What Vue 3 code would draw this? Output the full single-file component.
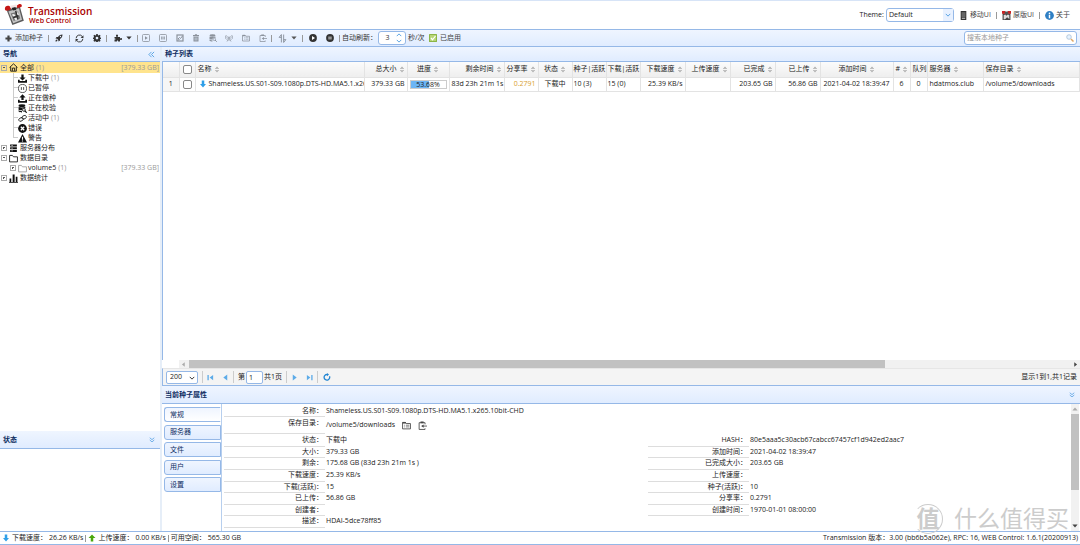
<script setup>
import { h, ref } from 'vue'

const shapes = {
  plus: '<path fill="currentColor" d="M5.500 1h5v4.500H15v5h-4.500V15h-5v-4.500H1v-5h4.500z"/>',
  rocket: '<path fill="currentColor" d="M15 1c-5 0-7 2-9 5H3L1 9l3 .5L6.500 12l.5 3 3-2v-3c3-2 5-4 5-9zM3 11c-1.500 0-2 2-2 4 2 0 4-.5 4-2z"/><circle cx="11" cy="5" r="1.300" fill="#e8f0ff"/>',
  refresh: '<path fill="none" stroke="currentColor" stroke-width="1.700" d="M2 7.500A6 6 0 0 1 13 4.500M14 8.500A6 6 0 0 1 3 11.500"/><path fill="currentColor" d="M15 2v5h-5zM1 14V9h5z"/>',
  gear: '<path fill="currentColor" fill-rule="evenodd" d="M6.500 0h3l.4 2.300 1.400.6L13.200 1.600l2 2-1.300 1.900.6 1.400 1.500.4v2.500l-1.500.4-.6 1.500 1.300 1.900-2 2-1.900-1.300-1.400.6-.4 1.600h-3l-.4-1.600-1.400-.6-1.900 1.300-2-2 1.300-1.900-.6-1.500L0 9.800V7.300l1.500-.4.6-1.400L.8 3.600l2-2 1.900 1.300 1.400-.6zM8 5.500a2.700 2.700 0 1 0 0 5.400 2.700 2.700 0 0 0 0-5.400z"/>',
  puzzle: '<path fill="currentColor" d="M1 6h4C3 3 4 1 6 1s3 2 1 5h5v3c2-2 4-1 4 1s-2 3-4 1v4H8c1-3-3-3-2 0H1v-4c3 1 3-3 0-2z"/>',
  caret: '<path fill="currentColor" d="M1 4h14l-7 8z"/>',
  playSquare: '<rect x="1" y="1" width="14" height="14" rx="2" fill="none" stroke="currentColor" stroke-width="1.600"/><path fill="currentColor" d="M6 4.500v7L11.500 8z"/>',
  pauseSquare: '<rect x="1" y="1" width="14" height="14" rx="2" fill="none" stroke="currentColor" stroke-width="1.600"/><path fill="currentColor" d="M4.500 5h2.500v6H4.500zM9 5h2.500v6H9z"/>',
  checkSquare: '<rect x="2" y="2" width="12" height="12" fill="none" stroke="currentColor" stroke-width="2.400"/><path fill="none" stroke="currentColor" stroke-width="2" d="M4 10l3-3 2 2 4-5M4 12l3-1"/>',
  trash: '<path fill="currentColor" d="M2 2h3.500l1-1.500h3l1 1.500H14v2.500H2zM3 5.500h10V15H3z"/><path stroke="#dce8fb" d="M6 7v6M8 7v6M10 7v6"/>',
  recheck: '<ellipse cx="7" cy="3" rx="6" ry="2.500" fill="currentColor"/><path fill="currentColor" d="M1 5c2 1.500 10 1.500 12 0v3c-4-1-6 0-6 3-3 0-5 0-6-1zM1 11c1 1 3 1.500 6 1.500V15c-3 0-5-.5-6-1.500z"/><circle cx="10.500" cy="10.500" r="2.500" fill="none" stroke="currentColor" stroke-width="1.500"/><path stroke="currentColor" stroke-width="2" d="M12 12l3.500 3.500"/>',
  antenna: '<path fill="none" stroke="currentColor" stroke-width="1.400" d="M3 2C0 5 0 8 3 11M13 2c3 3 3 6 0 9M5 4C3.500 6 3.500 7 5 9M11 4c1.500 2 1.500 3 0 5M8 7l-4 8M8 7l4 8M6 12h4"/><circle cx="8" cy="6.500" r="1.500" fill="currentColor"/>',
  folderList: '<path fill="none" stroke="currentColor" stroke-width="1.500" d="M1 14V2.500h5l1.500 2H15V14z"/><path fill="none" stroke="currentColor" stroke-width="1.200" d="M4 7.500h1.500M7 7.500h6M4 10.500h1.500M7 10.500h6"/><path fill="currentColor" d="M1 2h6v2.500H1z"/>',
  paste: '<path fill="none" stroke="currentColor" stroke-width="1.500" d="M12.500 6V3H2v12h10.500v-2"/><path fill="currentColor" d="M4.500 1h5.500v3H4.500zM10 6v6L5.500 9z"/><path stroke="currentColor" stroke-width="1.500" d="M9 9h7"/>',
  sort: '<path fill="none" stroke="currentColor" stroke-width="1.700" d="M6 1v14M6 1L2 6h4M10 15V1M10 15l4-5h-4"/>',
  playCircle: '<circle cx="8" cy="8" r="7.800" fill="currentColor"/><path fill="#fff" d="M6 4v8l6-4z"/>',
  pauseCircle: '<circle cx="8" cy="8" r="7.800" fill="currentColor"/><path fill="#ccc" d="M5 5h2.300v6H5zM8.700 5H11v6H8.700z"/>',
  home: '<path fill="none" stroke="currentColor" stroke-width="1.600" d="M1 8l7-6.500L15 8M3 7v7.500h10V7M6 14V9h4v5"/>',
  download: '<path fill="currentColor" d="M6 1h4v5h3.500L8 11.500 2.500 6H6zM0 10h3v2.500h10V10h3v5.500H0z"/>',
  upload: '<path fill="currentColor" d="M6 10.500h4V6h3.500L8 .5 2.500 6H6zM0 10h3v2.500h10V10h3v5.500H0z"/>',
  pauseOutline: '<circle cx="8" cy="8" r="7.200" fill="none" stroke="currentColor" stroke-width="1.200"/><path stroke="currentColor" stroke-width="1.300" d="M6 5.500v5M10 5.500v5"/>',
  link: '<rect x="1" y="7" width="8" height="5.500" rx="2.700" transform="rotate(-25 5 9)" fill="none" stroke="currentColor" stroke-width="1.400"/><rect x="7" y="3" width="8" height="5.500" rx="2.700" transform="rotate(-25 11 6)" fill="none" stroke="currentColor" stroke-width="1.400"/>',
  error: '<circle cx="8" cy="8" r="7.800" fill="currentColor"/><path stroke="#fff" stroke-width="2.400" d="M5 5l6 6M11 5l-6 6"/>',
  warning: '<path fill="currentColor" d="M8 0l8 15H0z"/><path stroke="#fff" stroke-width="2" d="M8 5v5M8 11.500v2"/>',
  server: '<path fill="currentColor" d="M2 1h12v3.500H2zM2 5.800h12v3.400H2zM2 10.500h12V14H2z"/><path stroke="#fff" stroke-width="1" d="M4 2.700h3M4 7.500h3M4 12.200h3"/>',
  folder: '<path fill="none" stroke="currentColor" stroke-width="1.500" d="M1 14V2.500h5l2 2.500h7v9z"/>',
  chart: '<path fill="currentColor" d="M1 8h3v6H1zM6.500 1h3.500v13H6.500zM12 5h3v9h-3zM0 14h16v1.500H0z"/>',
  down: '<path fill="currentColor" d="M5.500 1h5v7H14l-6 7-6-7h3.500z"/>',
  up: '<path fill="currentColor" d="M5.500 15h5V8H15L8 1 1 8h4.500z"/>',
  phone: '<rect x="3" y="0" width="10" height="16" rx="1" fill="#333"/><rect x="4.500" y="2" width="7" height="9" fill="#666"/><path fill="#bbb" d="M5 12h6v2H5z"/>',
  info: '<circle cx="8" cy="8" r="7.800" fill="#2f7fc4"/><circle cx="8" cy="4" r="1.500" fill="#fff"/><path stroke="#fff" stroke-width="2.600" d="M8 6.500V13"/>',
  search: '<circle cx="6" cy="6" r="4.600" fill="#e6f3ff" stroke="#a9bfd6" stroke-width="1.600"/><path stroke="#e0a867" stroke-width="3" d="M10 10l5 5"/>',
  tick: '<rect width="16" height="16" rx="1" fill="#8bb547"/><rect x="2" y="2" width="12" height="12" fill="#b7d577"/><path fill="none" stroke="#fff" stroke-width="2.400" d="M4 8l3 3.500L13 4"/>',
  chevron: '<path fill="none" stroke="currentColor" stroke-width="2.400" d="M2 5l6 6 6-6"/>',
  chevronUp: '<path fill="none" stroke="currentColor" stroke-width="2.400" d="M2 11l6-6 6 6"/>',
  doubleDown: '<path fill="none" stroke="currentColor" stroke-width="2" d="M2 2l6 5 6-5M2 8l6 5 6-5"/>',
  doubleLeft: '<path fill="none" stroke="currentColor" stroke-width="2" d="M8 2L2 8l6 6M14 2L8 8l6 6"/>',
  first: '<path fill="currentColor" d="M1 2h3v12H1zM14 2v12L6 8z"/>',
  prev: '<path fill="currentColor" d="M12 1v14L3 8z"/>',
  next: '<path fill="currentColor" d="M4 1v14l9-7z"/>',
  last: '<path fill="currentColor" d="M12 2h3v12h-3zM2 2v12l8-6z"/>',
  reload: '<path fill="none" stroke="currentColor" stroke-width="2.600" d="M13 6.500A5.600 5.600 0 1 1 8 3"/><path fill="currentColor" d="M8 0v6.500L12 3z"/>',
  sorter: '<path fill="currentColor" d="M8 0l5.500 6.500h-11zM8 16l5.500-6.500h-11z"/><path fill="#f6f6f6" d="M8 3l2 2.300H6zM8 13l2-2.300H6z"/>',
  logo: '<path fill="#5a5a5a" d="M6 15l30-8 9 32-26 10z"/><path fill="#c4c4c4" d="M10 18l24-7 7 26-20 8z"/><path fill="#777" d="M15 23l17-5 5 16-15 6z"/><path fill="#f2f2f2" d="M18 25l5-1 9 12-6 2zM28 21l4-1 2 6-4 1z"/><path fill="#333" d="M20 30l12-4 1 4-12 4zM25 17l3-1 5 20-3 1z"/><path fill="#c41616" d="M2 12c0-6 5-8 11-6l3 6c-3 4-6 4-9 4-3 1-5-1-5-4zM29 5c4-4 9-5 11-2 2 4-1 6-5 6l-5 1z"/><path fill="#f3e4e4" d="M14 5l14-3 2 6-14 3z"/><path fill="#222" d="M17 10l9-2 2 6-7 2z"/>',
  miniLogo: '<path fill="#444" d="M1 4h14v12H1z"/><path fill="#ddd" d="M3 7l4-1v3l3-3 3 1v7l-4-3-3 3-3 1z"/><path fill="#c22" d="M0 0h6v5H0zM10 0h6v5h-6z"/><path fill="#555" d="M5 1h6v5H5z"/>',
}
const Icon = (props) =>
  h('svg', {
    viewBox: props.name === 'logo' ? '0 0 50 50' : '0 0 16 16',
    'aria-hidden': 'true',
    innerHTML: shapes[props.name],
  })
Icon.props = ['name']

const actions = [
  ['playSquare', '开始'], ['pauseSquare', '暂停'], ['checkSquare', '重命名'], ['trash', '删除'],
  ['recheck', '校验'], ['antenna', '获取更多'], ['folderList', '变更目录'], ['paste', '复制路径'],
]
const tree = [
  { label: '全部', icon: 'home', level: 0, box: '-', count: 1, size: '[379.33 GB]', active: true },
  { label: '下载中', icon: 'download', level: 1, count: 1 },
  { label: '已暂停', icon: 'pauseOutline', level: 1 },
  { label: '正在做种', icon: 'upload', level: 1 },
  { label: '正在校验', icon: 'recheck', level: 1 },
  { label: '活动中', icon: 'link', level: 1, count: 1 },
  { label: '错误', icon: 'error', level: 1 },
  { label: '警告', icon: 'warning', level: 1, end: true },
  { label: '服务器分布', icon: 'server', level: 0, box: '+' },
  { label: '数据目录', icon: 'folder', level: 0, box: '-' },
  { label: 'volume5', icon: 'folder', level: 1, box: '+', count: 1, size: '[379.33 GB]', pale: true },
  { label: '数据统计', icon: 'chart', level: 0, box: '+' },
]
const columns = [
  { key: 'name', title: '名称', sort: true, align: 'left' },
  { key: 'size', title: '总大小', sort: true, align: 'right' },
  { key: 'progress', title: '进度', sort: true, align: 'center' },
  { key: 'remain', title: '剩余时间', sort: true, align: 'right' },
  { key: 'ratio', title: '分享率', sort: true, align: 'right' },
  { key: 'status', title: '状态', sort: true, align: 'center' },
  { key: 'seeds', title: '种子|活跃', align: 'tight' },
  { key: 'peers', title: '下载|活跃', align: 'tight' },
  { key: 'down', title: '下载速度', sort: true, align: 'right' },
  { key: 'up', title: '上传速度', sort: true, align: 'right' },
  { key: 'done', title: '已完成', sort: true, align: 'right' },
  { key: 'sent', title: '已上传', sort: true, align: 'right' },
  { key: 'added', title: '添加时间', sort: true, align: 'center' },
  { key: 'id', title: '#', sort: true, align: 'center' },
  { key: 'queue', title: '队列', align: 'center' },
  { key: 'server', title: '服务器', sort: true, align: 'left' },
  { key: 'dir', title: '保存目录', sort: true, align: 'left' },
]
const torrent = {
  name: 'Shameless.US.S01-S09.1080p.DTS-HD.MA5.1.x265.10bit-CHD',
  size: '379.33 GB', progress: 53.68, remain: '83d 23h 21m 1s', ratio: '0.2791', status: '下载中',
  seeds: '10 (3)', peers: '15 (0)', down: '25.39 KB/s', up: '', done: '203.65 GB', sent: '56.86 GB',
  added: '2021-04-02 18:39:47', id: '6', queue: '0', server: 'hdatmos.club', dir: '/volume5/downloads',
}
const tabs = ['常规', '服务器', '文件', '用户', '设置']
const tab = ref('常规')
const details = [
  ['状态', '下载中', 'HASH', '80e5aaa5c30acb67cabcc67457cf1d942ed2aac7'],
  ['大小', '379.33 GB', '添加时间', '2021-04-02 18:39:47'],
  ['剩余', '175.68 GB (83d 23h 21m 1s )', '已完成大小', '203.65 GB'],
  ['下载速度', '25.39 KB/s', '上传速度', ''],
  ['下载(活跃)', '15', '种子(活跃)', '10'],
  ['已上传', '56.86 GB', '分享率', '0.2791'],
  ['创建者', '', '创建时间', '1970-01-01 08:00:00'],
  ['描述', 'HDAI-5dce78ff85'],
]
</script>

<template>
  <div class="app">
    <header class="top">
      <Icon name="logo" class="logo" />
      <h1 class="brand">Transmission<small>Web Control</small></h1>
      <div class="links">
        <label for="theme">Theme:</label>
        <span class="combo">
          <select id="theme"><option>Default</option></select>
          <Icon name="chevron" class="combo-arrow" />
        </span>
        <a href="#"><Icon name="phone" class="i9" />移动UI</a>
        <i class="sep"></i>
        <a href="#"><Icon name="miniLogo" class="i9" />原版UI</a>
        <i class="sep"></i>
        <a href="#"><Icon name="info" class="i9" />关于</a>
      </div>
    </header>

    <nav class="toolbar">
      <button class="add"><Icon name="plus" class="i7" />添加种子</button>
      <i class="sep"></i>
      <div class="group single"><button aria-label="磁力链接"><Icon name="rocket" class="i8" /></button></div>
      <i class="sep"></i>
      <div class="group pair">
        <button aria-label="刷新"><Icon name="refresh" class="i9" /></button>
        <button aria-label="设置"><Icon name="gear" class="i8" /></button>
      </div>
      <i class="sep"></i>
      <div class="group menu">
        <button aria-label="插件"><Icon name="puzzle" class="i8" /><Icon name="caret" class="i6" /></button>
      </div>
      <i class="sep"></i>
      <div class="group actions">
        <button v-for="[icon, name] in actions" :key="icon" :aria-label="name" disabled><Icon :name="icon" class="i8" /></button>
      </div>
      <i class="sep"></i>
      <div class="group menu">
        <button aria-label="排序" disabled><Icon name="sort" class="i9" /><Icon name="caret" class="i6 dark" /></button>
      </div>
      <i class="sep"></i>
      <div class="group pair">
        <button aria-label="全部开始"><Icon name="playCircle" class="i8" /></button>
        <button aria-label="全部暂停"><Icon name="pauseCircle" class="i8" /></button>
      </div>
      <i class="sep"></i>
      <label class="auto" for="interval">自动刷新：</label>
      <span class="spinner">
        <input id="interval" type="text" value="3" />
        <span class="steps"><Icon name="chevronUp" class="i6" /><Icon name="chevron" class="i6" /></span>
      </span>
      <span class="unit">秒/次</span>
      <button class="enabled"><Icon name="tick" class="i8" />已启用</button>
      <span class="search">
        <input type="text" placeholder="搜索本地种子" aria-label="搜索本地种子" />
        <Icon name="search" class="i8" />
      </span>
    </nav>

    <div class="body">
      <aside class="side">
        <h2 class="title short">导航<Icon name="doubleLeft" class="i7" /></h2>
        <ul class="tree">
          <li v-for="n in tree" :key="n.label" :class="['node', 'level' + n.level, { active: n.active }]">
            <i v-if="n.level && !n.box" :class="['branch', { end: n.end }]"></i>
            <i v-if="n.box" :class="['box', { open: n.box === '-' }]"></i>
            <Icon :name="n.icon" :class="['node-icon', { pale: n.pale }]" />
            <span>{{ n.label }}</span>
            <em v-if="n.count" class="count">({{ n.count }})</em>
            <em v-if="n.size" class="size">{{ n.size }}</em>
          </li>
        </ul>
        <h2 class="title">状态<Icon name="doubleDown" class="i6" /></h2>
        <div class="status-body"></div>
      </aside>

      <main class="main">
        <section class="list">
          <h2 class="title short">种子列表</h2>
          <div class="grid-area">
            <table class="torrents">
              <colgroup>
                <col class="w-num" /><col class="w-check" />
                <col v-for="c in columns" :key="c.key" :class="'w-' + c.key" />
              </colgroup>
              <thead>
                <tr>
                  <th></th>
                  <th class="check"><input type="checkbox" aria-label="全选" /></th>
                  <th v-for="c in columns" :key="c.key" :class="c.align">{{ c.title }}<Icon v-if="c.sort" name="sorter" class="sorter" /></th>
                </tr>
              </thead>
              <tbody>
                <tr>
                  <td class="num">1</td>
                  <td class="check"><input type="checkbox" aria-label="选择种子" /></td>
                  <td v-for="c in columns" :key="c.key" :class="[c.align, { gold: c.key === 'ratio' }]">
                    <div v-if="c.key === 'progress'" class="bar">
                      <div class="fill" :style="{ width: torrent.progress + '%' }"></div>
                      <span>{{ torrent.progress }}%</span>
                    </div>
                    <template v-else><Icon v-if="c.key === 'name'" name="down" class="i8 blue" />{{ torrent[c.key] }}</template>
                  </td>
                </tr>
              </tbody>
            </table>
          </div>
          <div class="hscroll">
            <Icon name="prev" class="i5 faint" /><div class="track"><div class="thumb"></div></div><Icon name="next" class="i5" />
          </div>
          <div class="pager">
            <span class="page-size">
              <select aria-label="每页条数"><option>200</option></select>
              <Icon name="chevron" class="i6" />
            </span>
            <i class="rule"></i>
            <button aria-label="首页"><Icon name="first" class="i7" /></button>
            <button aria-label="上一页"><Icon name="prev" class="i7" /></button>
            <i class="rule"></i>
            <label for="page">第</label>
            <input id="page" type="text" value="1" />
            <span class="pages">共1页</span>
            <i class="rule"></i>
            <button aria-label="下一页"><Icon name="next" class="i7" /></button>
            <button aria-label="末页"><Icon name="last" class="i7" /></button>
            <i class="rule"></i>
            <button aria-label="重新载入" class="reload"><Icon name="reload" class="i8" /></button>
            <span class="total">显示1到1,共1记录</span>
          </div>
        </section>

        <section class="props">
          <h2 class="title">当前种子属性<Icon name="doubleDown" class="i6" /></h2>
          <div class="props-body">
            <div class="tabs">
              <button v-for="t in tabs" :key="t" :class="{ on: t === tab }" @click="tab = t">{{ t }}</button>
            </div>
            <div class="detail">
              <div class="row name-row"><span class="key">名称：</span><span>{{ torrent.name }}</span></div>
              <div class="row path-row">
                <span class="key">保存目录：</span>
                <span class="path">{{ torrent.dir }}
                  <button aria-label="变更目录"><Icon name="folderList" class="i9" /></button>
                  <button aria-label="复制路径"><Icon name="paste" class="i9" /></button>
                </span>
              </div>
              <div class="facts">
                <div v-for="d in details" :key="d[0]" class="row">
                  <span class="key">{{ d[0] }}：</span><span>{{ d[1] }}</span>
                  <template v-if="d[2]"><span class="key">{{ d[2] }}：</span><span>{{ d[3] }}</span></template>
                </div>
              </div>
            </div>
            <div class="vscroll">
              <Icon name="caret" class="i6 flip faint" /><div class="track"><div class="thumb"></div></div><Icon name="caret" class="i6" />
            </div>
          </div>
        </section>
      </main>
    </div>

    <footer class="foot">
      <Icon name="down" class="i8 blue" /><span class="speed">下载速度：</span><span class="rate">26.26 KB/s</span>
      <i class="sep"></i>
      <Icon name="up" class="i8 green" /><span class="speed">上传速度：</span><span class="rate">0.00 KB/s</span>
      <i class="sep"></i>
      <span>可用空间：</span><span class="rate">565.30 GB</span>
      <span class="version">Transmission 版本：3.00 (bb6b5a062e), RPC: 16, WEB Control: 1.6.1(20200913)</span>
    </footer>

    <div class="watermark"><b>值</b><span>什么值得买</span></div>
  </div>
</template>

<style>
html, body, #app { height: 100%; }
body { margin: 0; }
</style>

<style scoped>
* { box-sizing: border-box; }
.app {
  position: relative;
  display: flex;
  flex-direction: column;
  height: 100%;
  overflow: hidden;
  background: #fff;
  color: #222;
  font: 7px/10px "Open Sans", "Noto Sans CJK SC", sans-serif;
}
button, input, select { font: inherit; color: inherit; margin: 0; padding: 0; }
button { border: 0; background: none; display: flex; align-items: center; justify-content: center; }
input:focus, select:focus { outline: none; }
svg { flex: none; display: block; }
em { font-style: normal; }
a { color: #444; text-decoration: none; display: flex; align-items: center; gap: 2px; }
.i5 { width: 5px; height: 5px; }
.i6 { width: 6px; height: 6px; }
.i7 { width: 7px; height: 7px; }
.i8 { width: 8px; height: 8px; }
.i9 { width: 9px; height: 9px; }
.blue { color: #2f9fe8; }
.green { color: #4aa80c; }
.faint { color: #aaa; }
.sep { flex: none; width: 1px; height: 7px; background: #999; }

.top { flex: none; display: flex; height: 29px; border-top: 1px solid #d7e4f7; }
.logo { width: 22px; height: 23px; margin: 2px 0 0 4px; }
.brand { margin: 4px 0 0 2px; color: #a80000; font-size: 10px; font-weight: 600; line-height: 12px; }
.brand small { display: block; margin-left: 1px; font-size: 7px; line-height: 8px; }
.links { display: flex; align-items: center; gap: 5px; margin-left: auto; padding-right: 10px; }
.links label { margin-right: -3px; }
.combo { position: relative; width: 68px; height: 14px; }
.combo select { width: 100%; height: 100%; padding-left: 2px; border: 1px solid #95b8e7; border-radius: 3px; background: #fff; appearance: none; }
.combo-arrow { position: absolute; right: 1px; top: 1px; width: 10px; height: 12px; padding: 2px; background: #e8f1ff; color: #4b9be0; }

.toolbar { flex: none; display: flex; align-items: center; height: 18px; padding-left: 5px; border: 1px solid #95b8e7; border-width: 1px 0; background: linear-gradient(#eff5ff, #e0ecff); color: #333; }
.add { width: 43px; gap: 3px; justify-content: flex-start; color: #444; white-space: nowrap; }
.group { display: flex; }
.group button { flex: 1; height: 12px; }
.single { width: 20px; }
.pair { width: 36px; padding: 0 1px; }
.menu { width: 30px; padding: 0 2px 0 3px; }
.menu button { gap: 4px; }
.actions { width: 133px; }
.group button:disabled { color: #8b929c; }
.group .dark { color: #555; }
.auto { width: 38px; padding-left: 2px; white-space: nowrap; }
.spinner { display: flex; width: 28px; height: 14px; border: 1px solid #95b8e7; border-radius: 3px; background: #fff; }
.spinner input { width: 17px; border: 0; background: none; text-align: center; }
.steps { color: #4b9be0; }
.unit { width: 23px; padding-left: 2px; white-space: nowrap; }
.enabled { gap: 3px; color: #444; }
.search { display: flex; align-items: center; width: 113px; height: 14px; margin: 0 3px 0 auto; padding: 0 2px; border: 1px solid #95b8e7; border-radius: 3px; background: #fff; }
.search input { flex: 1; min-width: 0; border: 0; background: none; }
.search input::placeholder { color: #999; opacity: 1; }

.body { flex: 1; display: flex; min-height: 0; background: #e6eef8; }
.title { flex: none; display: flex; align-items: center; justify-content: space-between; height: 18px; margin: 0; padding: 0 5px 0 3px; border: 1px solid #95b8e7; border-width: 0 0 1px; background: linear-gradient(#eff5ff, #e0ecff); color: #0e2d5f; font-size: 7px; line-height: 10px; }
.title.short { height: 15px; }
.title svg { color: #4b9be0; }
.side { flex: none; display: flex; flex-direction: column; width: 160px; background: #fff; }
.tree { flex: 1; margin: 0; padding: 0; list-style: none; }
.node { display: flex; align-items: center; height: 10px; padding: 0 1px; gap: 2px; }
.node.active { height: 11px; background: #ffe48d; }
.node em { color: #999; }
.node .size { margin-left: auto; }
.node-icon { width: 9px; height: 9px; color: #111; }
.pale { color: #999; }
.level1 { padding-left: 10px; gap: 1px; }
.level1 .box, .level1 .count { margin: 0 1px; }
.level1 .box { margin-left: 0; }
.branch { position: relative; width: 6px; height: 10px; margin-left: 3px; margin-right: -2px; border-left: 1px solid #ccc; }
.branch::after { content: ""; position: absolute; left: 0; top: 4px; width: 4px; border-top: 1px solid #ccc; }
.branch.end { height: 5px; margin-bottom: 5px; }
.box { position: relative; width: 6px; height: 6px; border: 1px solid #aaa; }
.box::before, .box:not(.open)::after { content: ""; position: absolute; left: 1px; top: 1px; width: 2px; height: 1px; background: #555; }
.box:not(.open)::after { height: 2px; width: 1px; }
.status-body { height: 82px; }

.main { flex: 1; min-width: 0; display: flex; flex-direction: column; margin-left: 2px; }
.list { flex: 1; min-height: 0; display: flex; flex-direction: column; background: #fff; }
.grid-area { flex: 1; border-left: 1px solid #95b8e7; overflow: hidden; }
.torrents { width: 100%; table-layout: fixed; border-collapse: collapse; }
.torrents th, .torrents td { height: 14px; padding: 0 2px; border: 1px solid #e3e3e3; border-width: 0 1px 1px 0; font-weight: 400; white-space: nowrap; overflow: hidden; text-align: left; }
.torrents th { height: 15px; background: linear-gradient(#fbfbfb, #eee); }
.torrents .right { text-align: right; }
.torrents .tight { padding: 0 0 0 1px; }
.torrents .center, .torrents .num { text-align: center; }
.torrents .num { background: #f6f6f6; }
.torrents .gold { color: #d9a02e; }
.torrents svg { display: inline-block; vertical-align: middle; }
.torrents td svg { margin: 0 2px 0 1px; }
.torrents .sorter { width: 6px; height: 7px; margin-left: 2px; color: #aaa; }
.torrents .check { padding: 0 3px; font-size: 0; }
.check input { width: 9px; height: 9px; appearance: none; border: 1px solid #888; border-radius: 2px; background: #fff; vertical-align: middle; }
.w-num { width: 16px; }
.w-check { width: 16px; }
.w-name { width: 169px; }
.w-size { width: 43px; }
.w-progress { width: 42px; }
.w-remain { width: 55px; }
.w-ratio, .w-status, .w-seeds, .w-peers { width: 34px; }
.w-down, .w-up, .w-done, .w-sent { width: 45px; }
.w-added { width: 73px; }
.w-id, .w-queue { width: 17px; }
.w-server { width: 56px; }
.bar { position: relative; height: 9px; border: 1px solid #ccc; line-height: 7px; text-align: center; }
.fill { position: absolute; inset: 0 auto 0 0; background: #6cb5f5; }
.bar span { position: relative; }
.hscroll { display: flex; align-items: center; height: 8px; margin-left: 17px; padding: 0 2px; background: #f1f1f1; color: #444; }
.hscroll .track { flex: 1; height: 8px; margin: 0 3px 0 3px; }
.hscroll .thumb { width: 79%; height: 100%; background: #c1c1c1; }
.pager { display: flex; align-items: center; height: 18px; padding: 0 3px; border: 1px solid #95b8e7; border-top-color: #e6e6e6; border-right: 0; background: #f4f4f4; }
.page-size { position: relative; width: 32px; height: 13px; margin-right: 4px; }
.page-size select { width: 100%; height: 100%; padding-left: 3px; border: 1px solid #95b8e7; border-radius: 2px; background: #fff; appearance: none; }
.page-size svg { position: absolute; right: 3px; top: 4px; }
.pager button { width: 15px; height: 12px; color: #5cabe8; }
.pager .reload { width: 17px; color: #2386d3; }
.rule { width: 1px; height: 12px; background: #ccc; }
.pager label { margin-left: 4px; }
.pager input { width: 17px; height: 13px; margin: 0 1px; padding-left: 2px; border: 1px solid #95b8e7; border-radius: 2px; background: #fff; }
.pages { margin-right: 4px; }
.total { margin-left: auto; }

.props { flex: none; display: flex; flex-direction: column; height: 145px; background: #fff; }
.props-body { flex: 1; display: flex; min-height: 0; }
.tabs { flex: none; display: flex; flex-direction: column; justify-content: space-between; height: 85px; width: 59px; margin-top: 3px; padding-left: 2px; }
.tabs button { height: 15px; padding-left: 5px; justify-content: flex-start; border: 1px solid #95b8e7; border-radius: 3px 0 0 3px; background: linear-gradient(#eff5ff, #e0ecff); color: #0e2d5f; }
.tabs .on { border-right-color: #fff; background: linear-gradient(#eff5ff, #fff); }
.detail { flex: 1; min-width: 0; padding-left: 2px; border-left: 1px solid #b7cfee; }
.row { display: grid; grid-template-columns: 101px 1fr 101px 1fr; column-gap: 1px; min-height: 0; white-space: nowrap; }
.row > span { line-height: 10px; }
.row .key { padding-right: 2px; border-bottom: 1px solid #ddd; text-align: right; }
.row.name-row { height: 13px; }
.name-row > span { padding-top: 2px; }
.row.path-row { height: 17px; }
.path-row .key { padding-top: 1px; }
.path-row .path { display: flex; align-items: center; gap: 7px; padding-bottom: 1px; }
.path button { width: 9px; height: 9px; color: #444; }
.facts { display: grid; grid-template-rows: repeat(8, 1fr); height: 94px; padding-top: 1px; }
.vscroll { display: flex; flex-direction: column; align-items: center; width: 8px; margin-right: 1px; padding: 2px 0; background: #f1f1f1; color: #444; }
.vscroll .track { flex: 1; width: 100%; margin: 2px 0; }
.vscroll .thumb { height: 71%; background: #c1c1c1; }
.flip { transform: rotate(180deg); }

.foot { flex: none; display: flex; align-items: center; gap: 2px; height: 14px; padding: 0 2px; border: 1px solid #95b8e7; border-width: 1px 0; background: #fff; white-space: nowrap; }
.version { margin-left: auto; }

.watermark { position: absolute; right: 11px; bottom: 11px; display: flex; align-items: center; gap: 11px; height: 31px; color: #ccc; font-size: 23px; line-height: 31px; pointer-events: none; }
.watermark b { flex: none; width: 30px; height: 30px; border: 1px solid #ccc; border-left-color: transparent; border-radius: 50%; line-height: 27px; text-align: center; }
</style>
